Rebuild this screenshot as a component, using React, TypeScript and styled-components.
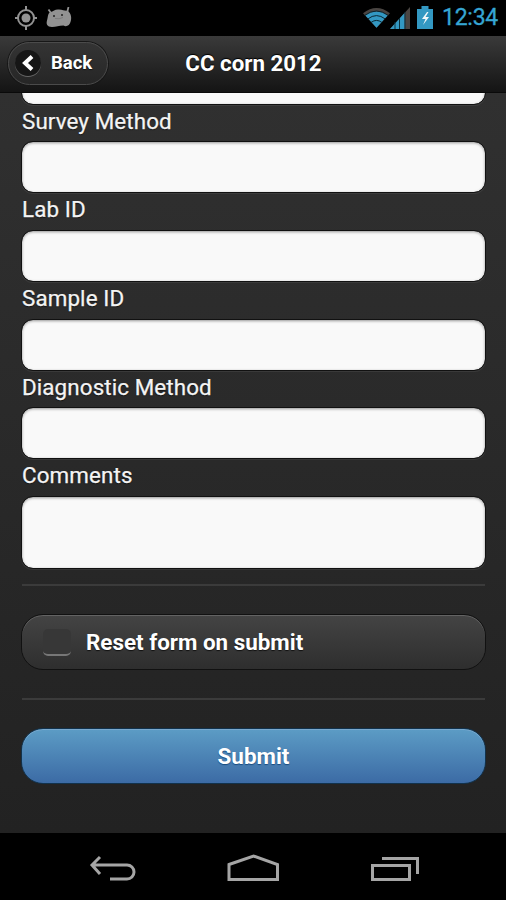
import React from "react";
import styled, { createGlobalStyle, css } from "styled-components";

const GlobalStyle = createGlobalStyle`
  * { box-sizing: border-box; }
  html, body { margin: 0; background: #000; }
  body, button, input, textarea { font-family: Roboto, "Liberation Sans", sans-serif; }
`;

const Screen = styled.div`
  width: 506px;
  height: 900px;
  display: flex;
  flex-direction: column;
  overflow: hidden;
  background: #000;
  color: #fff;
`;

const StatusBar = styled.div`
  height: 36px;
  flex: none;
  display: flex;
  align-items: center;
  justify-content: space-between;
  padding: 0 8px 0 14px;
`;

const StatusGroup = styled.div<{ $gap: number }>`
  display: flex;
  align-items: center;
  gap: ${(p) => p.$gap}px;
`;

const Clock = styled.span`
  color: #36a6d3;
  font-size: 23px;
  line-height: 36px;
  letter-spacing: -0.25px;
  -webkit-text-stroke: 0.3px #36a6d3;
`;

const Header = styled.header`
  height: 57px;
  flex: none;
  display: grid;
  grid-template-columns: 100px 1fr 100px;
  align-items: center;
  padding: 0 8px 2px;
  background: linear-gradient(#3a3a3a, #141414);
  border-bottom: 1px solid #0a0a0a;
`;

const BackButton = styled.button`
  height: 43px;
  width: 100px;
  display: flex;
  align-items: center;
  gap: 10px;
  padding: 0 0 0 6px;
  color: #fff;
  font-size: 18.5px;
  font-weight: 700;
  text-shadow: 0 1px 1px #111;
  border: 1px solid #4b4b4b;
  border-radius: 22px;
  background: linear-gradient(#343434, #262626);
  box-shadow: 0 0 0 1px #171717;
`;

const BackDisc = styled.span`
  width: 26px;
  height: 26px;
  flex: none;
  display: grid;
  place-items: center;
  padding-right: 1px;
  border-radius: 50%;
  background: #161616;
  box-shadow: 0 1px 0 #666;
`;

const Title = styled.h1`
  margin: 0;
  text-align: center;
  font-size: 22.3px;
  line-height: 30px;
  font-weight: 700;
  padding-left: 1px;
  text-shadow: 0 -1px 1px #000;
`;

const Content = styled.main`
  height: 740px;
  flex: none;
  overflow: hidden;
  padding: 0 20.5px;
  background: linear-gradient(#303030, #222);
`;

const Scrolled = styled.form`
  margin-top: -40.2px;
`;

const fieldLook = css`
  display: block;
  width: 465px;
  margin: 0;
  border: 1px solid #111;
  border-radius: 12px;
  outline: none;
  resize: none;
  background: #f9f9f9;
  background-clip: padding-box;
  box-shadow: inset 0 1px 3px rgba(0, 0, 0, 0.4), 0 1px 0 rgba(255, 255, 255, 0.07);
`;

const TextInput = styled.input`
  ${fieldLook}
  height: 52px;
`;

const TextArea = styled.textarea`
  ${fieldLook}
  height: 73px;
`;

const Label = styled.label`
  display: block;
  height: 36.6px;
  padding-left: 1.5px;
  font-size: 22.4px;
  line-height: 32.6px;
  letter-spacing: 0.1px;
  color: #f4f4f4;
  text-shadow: 0 1px 1px #111;
  -webkit-text-stroke: 0.25px #f4f4f4;
`;

const Divider = styled.hr<{ $top?: number }>`
  height: 2px;
  width: 463px;
  margin: ${(p) => p.$top ?? 0}px 0 0 1.5px;
  border: 0;
  background: #3b3b3b;
`;

const CheckRow = styled.label`
  height: 56px;
  width: 465px;
  margin: 28px 0;
  display: flex;
  align-items: center;
  padding: 1px 0 0 21px;
  border: 1px solid #111;
  border-radius: 22px;
  background: linear-gradient(#444, #2e2e2e);
  box-shadow: inset 0 1px 0 #636363;
  font-size: 22.4px;
  font-weight: 700;
  text-shadow: 0 1px 1px #111;
`;

const CheckMark = styled.span`
  width: 28px;
  height: 27px;
  margin-right: 15.5px;
  border-radius: 5px;
  background: #373737;
  border-bottom: 2px solid #777;
`;

const Submit = styled.button`
  display: block;
  width: 465px;
  height: 56px;
  margin-top: 28px;
  padding: 1px 0 0 1px;
  border: 1px solid #12324c;
  border-radius: 22px;
  background: linear-gradient(#5c9cc5, #3c6ba5);
  box-shadow: inset 0 1px 0 #79a9cf;
  color: #fff;
  font-size: 22.4px;
  font-weight: 700;
  text-shadow: 0 1px 1px #194b7e;
`;

const NavBar = styled.nav`
  flex: 1;
  display: flex;
  align-items: center;
  justify-content: space-between;
  padding: 4px 86px 0 88px;
`;

const GpsIcon = () => (
  <svg width="24" height="26" viewBox="0 0 24 26" fill="none" stroke="#929292" strokeWidth="2">
    <circle cx="12" cy="13" r="8" />
    <circle cx="12" cy="13" r="4.5" fill="#929292" stroke="none" />
    <path d="M12 1v4M12 21v4M1 13h3M20 13h3" />
  </svg>
);

const DroidIcon = () => (
  <svg width="26" height="22" viewBox="0 0 26 22">
    <path d="M2.500 2.500 5 6M22.500 0 21 6" stroke="#929292" strokeWidth="1.800" />
    <path d="M4 5.200C8 4 9 2 13 2.500 17 2.500 18 4 21 3.800 24.500 5 26 10 24.800 14 23.800 19 20 20 17.500 18.500 13 18.500 10 20 6 20 1 20 0 17 1 13.500 2.200 10 1.500 7 4 5.200Z" fill="#929292" />
    <circle cx="8" cy="9" r="1" fill="#222" />
    <circle cx="16" cy="8" r="1" fill="#222" />
    <path d="M9 11.500q4 1 8-1" stroke="#7c7c7c" fill="none" />
  </svg>
);

const WifiIcon = () => (
  <svg width="27" height="22" viewBox="0 0 28 22">
    <path d="M0 6Q14-5 28 6L14 21Z" fill="#4a4542" />
    <path d="M2.500 8.500Q14 0 25.500 8.500L14 21Z" fill="#3398c2" />
    <path d="M1.800 8.300Q14-.8 26.200 8.300M5 12Q14 5 23 12M8.500 15.500q5.500-4 11 0" fill="none" stroke="#07212c" strokeWidth="1" />
  </svg>
);

const SignalIcon = () => (
  <svg width="20" height="22" viewBox="0 0 20 22">
    <path d="M0 22 20 0V22Z" fill="#4a4542" />
    <path d="M0 22 14.500 6V22Z" fill="#3398c2" />
    <path d="M5 15v7M9.500 11v11M15 5v17" stroke="#0b3140" strokeWidth="1" />
  </svg>
);

const BatteryIcon = () => (
  <svg width="16" height="24" viewBox="0 0 16 24">
    <path d="M0 3h4.500V0h7v3H16v20H0Z" fill="#3398c2" />
    <path d="M10 6 5 13h3.500L6 19l6-8H8.500L11.500 6Z" fill="#f3f8fa" />
  </svg>
);

const fields = ["Survey Method", "Lab ID", "Sample ID", "Diagnostic Method"];

export default function App() {
  return (
    <>
      <GlobalStyle />
      <Screen>
        <StatusBar>
          <StatusGroup $gap={8}>
            <GpsIcon />
            <DroidIcon />
          </StatusGroup>
          <StatusGroup $gap={7}>
            <StatusGroup $gap={0}>
              <WifiIcon />
              <SignalIcon />
            </StatusGroup>
            <StatusGroup $gap={9}>
              <BatteryIcon />
              <Clock>12:34</Clock>
            </StatusGroup>
          </StatusGroup>
        </StatusBar>
        <Header>
          <BackButton>
            <BackDisc>
              <svg width="14" height="16" viewBox="0 0 14 16" fill="none" stroke="#fff" strokeWidth="4">
                <path d="M11 1.500 4 8l7 6.500" />
              </svg>
            </BackDisc>
            Back
          </BackButton>
          <Title>CC corn 2012</Title>
        </Header>
        <Content>
          <Scrolled>
            <TextInput />
            {fields.map((name) => (
              <React.Fragment key={name}>
                <Label>{name}</Label>
                <TextInput aria-label={name} />
              </React.Fragment>
            ))}
            <Label>Comments</Label>
            <TextArea aria-label="Comments" />
            <Divider $top={15} />
            <CheckRow>
              <CheckMark />
              Reset form on submit
            </CheckRow>
            <Divider />
            <Submit type="button">Submit</Submit>
          </Scrolled>
        </Content>
        <NavBar>
          <svg width="50" height="30" viewBox="0 0 50 30" fill="none" stroke="#a5a5a5" strokeWidth="3">
            <path d="M12 3 4 11l8 9M4 11h35a7 7 0 0 1 0 14H22" />
          </svg>
          <svg width="54" height="30" viewBox="0 0 54 30" fill="none" stroke="#a5a5a5" strokeWidth="3">
            <path d="M2 10.500 26.500 2l24 8.500V25.500H2Z" />
          </svg>
          <svg width="50" height="30" viewBox="0 0 50 30" fill="none" stroke="#a5a5a5" strokeWidth="3">
            <path d="M2.500 11.500h37v14h-37ZM12 4.500h35.500V20" />
          </svg>
        </NavBar>
      </Screen>
    </>
  );
}
